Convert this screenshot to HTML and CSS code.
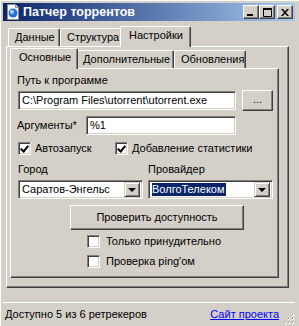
FILE: index.html
```html
<!DOCTYPE html>
<html lang="ru">
<head>
<meta charset="utf-8">
<title>Патчер торрентов</title>
<link rel="stylesheet" href="styles.css">
</head>
<body>
<div class="window">
  <div class="titlebar">
    <svg class="app-icon" width="16" height="16" viewBox="0 0 16 16">
      <path d="M2.5 0.5h8l3 3v12h-11z" fill="#fff" stroke="#8a8a8a"/>
      <path d="M10.5 0.5v3h3" fill="#e0e0e0" stroke="#8a8a8a"/>
      <circle cx="8" cy="9" r="4.5" fill="#2a6fd6"/>
      <circle cx="7" cy="8" r="2.2" fill="#7fb6ff"/>
      <circle cx="6.5" cy="7.5" r="0.9" fill="#e6f2ff"/>
    </svg>
    <span class="title">Патчер торрентов</span>
    <div class="caption-btns">
      <div class="cap">
        <svg width="8" height="7" viewBox="0 0 8 7"><rect x="0" y="5" width="6" height="2" fill="#000"/></svg>
      </div>
      <div class="cap">
        <svg width="9" height="9" viewBox="0 0 9 9"><path d="M0.5 0.5h8v8h-8z" fill="none" stroke="#000"/><rect x="0" y="0" width="9" height="2" fill="#000"/></svg>
      </div>
      <div class="cap close">
        <svg width="8" height="7" viewBox="0 0 8 7"><path d="M0 0h2l2 2.5l2-2.5h2l-3 3.5l3 3.5h-2l-2-2.5l-2 2.5h-2l3-3.5z" fill="#000"/></svg>
      </div>
    </div>
  </div>

  <div class="client">
    <div class="tabs outer-tabs">
      <div class="tab t-data">Данные</div>
      <div class="tab t-struct">Структура</div>
      <div class="tab active t-settings">Настройки</div>
    </div>
    <div class="panel outer-panel">
      <div class="tabs inner-tabs">
        <div class="tab active t-main">Основные</div>
        <div class="tab t-extra">Дополнительные</div>
        <div class="tab t-upd">Обновления</div>
      </div>
      <div class="panel inner-panel">
        <div class="label path-label">Путь к программе</div>
        <div class="row path-row">
          <div class="field path-field">C:\Program Files\utorrent\utorrent.exe</div>
          <div class="btn browse">...</div>
        </div>
        <div class="row args-row">
          <span class="label">Аргументы*</span>
          <div class="field args-field">%1</div>
        </div>
        <div class="row checks-row">
          <div class="check c-auto"><span class="box checked"></span><span>Автозапуск</span></div>
          <div class="check c-stat"><span class="box checked"></span><span>Добавление статистики</span></div>
        </div>
        <div class="combos">
          <div class="combo-col">
            <div class="label">Город</div>
            <div class="combo"><div class="combo-text">Саратов-Энгельс</div><div class="combo-btn"></div></div>
          </div>
          <div class="combo-col">
            <div class="label">Провайдер</div>
            <div class="combo"><div class="combo-text"><span class="sel">ВолгоТелеком</span></div><div class="combo-btn"></div></div>
          </div>
        </div>
        <div class="btn check-btn">Проверить доступность</div>
        <div class="check opt"><span class="box"></span><span>Только принудительно</span></div>
        <div class="check opt"><span class="box"></span><span>Проверка ping'ом</span></div>
      </div>
    </div>
  </div>

  <div class="statusbar">
    <span class="status-text">Доступно 5 из 6 ретрекеров</span>
    <a class="site-link" href="#">Сайт проекта</a>
    <svg class="grip" width="12" height="12" viewBox="0 0 12 12">
      <rect x="9" y="1" width="2" height="2" fill="#fff"/><rect x="9" y="1" width="1" height="1" fill="#808080"/>
      <rect x="5" y="5" width="2" height="2" fill="#fff"/><rect x="5" y="5" width="1" height="1" fill="#808080"/>
      <rect x="9" y="5" width="2" height="2" fill="#fff"/><rect x="9" y="5" width="1" height="1" fill="#808080"/>
      <rect x="1" y="9" width="2" height="2" fill="#fff"/><rect x="1" y="9" width="1" height="1" fill="#808080"/>
      <rect x="5" y="9" width="2" height="2" fill="#fff"/><rect x="5" y="9" width="1" height="1" fill="#808080"/>
      <rect x="9" y="9" width="2" height="2" fill="#fff"/><rect x="9" y="9" width="1" height="1" fill="#808080"/>
    </svg>
  </div>
</div>
</body>
</html>
```

FILE: styles.css
```css
* { box-sizing: border-box; }

html, body {
  margin: 0;
  padding: 0;
  background: #D4D0C8;
}

body {
  font-family: "Liberation Sans", Arial, sans-serif;
  font-size: 11px;
  line-height: 13px;
  color: #000;
}

.window {
  width: 299px;
  height: 326px;
  padding: 3px 4px 0 3px;
  display: flex;
  flex-direction: column;
  background: #D4D0C8;
  box-shadow: inset 1px 1px 0 #fff;
  overflow: hidden;
}

/* ---------- title bar ---------- */
.titlebar {
  height: 18px;
  flex: none;
  display: flex;
  align-items: center;
  padding-left: 2px;
  background: linear-gradient(to right, #0A246A, #A6CAF0);
  color: #fff;
}

.app-icon { flex: none; margin-right: 2px; }

.title {
  font-weight: bold;
  font-size: 12.5px;
  white-space: nowrap;
}

.caption-btns {
  margin-left: auto;
  margin-right: 2px;
  display: flex;
}

.cap {
  width: 16px;
  height: 14px;
  display: flex;
  align-items: center;
  justify-content: center;
  background: #D4D0C8;
  border: 1px solid;
  border-color: #fff #404040 #404040 #fff;
  box-shadow: inset -1px -1px 0 #808080;
}

.cap.close { margin-left: 2px; }

/* ---------- tabs ---------- */
.client {
  flex: none;
  display: flex;
  flex-direction: column;
}

.tabs {
  display: flex;
  align-items: flex-end;
  position: relative;
  z-index: 2;
}

.outer-tabs {
  margin-top: 5px;
  height: 21px;
  padding-left: 5px;
  margin-bottom: -1px;
}

.inner-tabs {
  margin-top: 2px;
  height: 20px;
  padding-left: 2px;
  margin-bottom: -1px;
}

.tab {
  height: 18px;
  padding: 2px 6px 0 6px;
  white-space: nowrap;
  background: #D4D0C8;
  border-top: 1px solid #fff;
  border-left: 1px solid #fff;
  border-right: 1px solid #404040;
  border-radius: 2px 2px 0 0;
  box-shadow: inset -1px 0 0 #808080;
  margin-bottom: 1px;
}

.tab.active {
  height: 21px;
  margin: 0 -2px 0 -2px;
  padding: 2px 8px 0 8px;
  position: relative;
  z-index: 3;
}

.t-data { width: 52px; }
.t-struct { width: 62px; }
.t-settings { width: 71px; }
.t-main { width: 68px; }
.t-extra { width: 98px; }
.t-upd { width: 72px; }

.panel {
  background: #D4D0C8;
  border-top: 1px solid #fff;
  border-left: 1px solid #fff;
  border-right: 1px solid #404040;
  border-bottom: 1px solid #404040;
  box-shadow: inset -1px -1px 0 #808080;
}

.outer-panel {
  margin-left: 3px;
  width: 283px;
  height: 242px;
  padding: 0 0 0 3px;
}

.inner-panel {
  width: 269px;
  height: 210px;
  padding: 4px 0 0 6px;
  display: flex;
  flex-direction: column;
}

/* ---------- form controls ---------- */
.label { white-space: nowrap; }

.path-label { margin-top: 1px; }

.row { display: flex; align-items: center; }

.field {
  height: 19px;
  background: #fff;
  border: 1px solid;
  border-color: #808080 #fff #fff #808080;
  box-shadow: inset 1px 1px 0 #404040, inset -1px -1px 0 #D4D0C8;
  padding: 2px 3px 0 3px;
  white-space: nowrap;
  overflow: hidden;
}

.path-row { margin-top: 3px; margin-left: 1px; height: 21px; }
.path-field { width: 218px; }

.btn {
  display: flex;
  align-items: center;
  justify-content: center;
  background: #D4D0C8;
  border: 1px solid;
  border-color: #fff #404040 #404040 #fff;
  box-shadow: inset -1px -1px 0 #808080;
  white-space: nowrap;
}

.browse {
  width: 31px;
  height: 21px;
  margin-left: 6px;
  padding-bottom: 2px;
}

.args-row { margin-top: 5px; height: 19px; }
.args-row .label { width: 69px; }
.args-field { width: 150px; }

.checks-row { margin-top: 7px; margin-left: 1px; height: 13px; }

.check { display: flex; align-items: center; white-space: nowrap; }
.check .box { margin-right: 4px; }
.c-auto { width: 97px; }

.box {
  width: 13px;
  height: 13px;
  flex: none;
  background: #fff;
  border: 1px solid;
  border-color: #808080 #fff #fff #808080;
  box-shadow: inset 1px 1px 0 #404040, inset -1px -1px 0 #D4D0C8;
  position: relative;
}

.box.checked::after {
  content: "";
  position: absolute;
  left: 3px;
  top: 1px;
  width: 3px;
  height: 6px;
  border: solid #000;
  border-width: 0 2px 2px 0;
  transform: rotate(40deg);
}

.combos {
  display: flex;
  margin-top: 8px;
  margin-left: 1px;
  gap: 5px;
}

.combo-col { display: flex; flex-direction: column; }
.combo-col .label { height: 15px; }
.combo-col .combo { margin-top: 2px; }

.combo {
  width: 125px;
  height: 19px;
  display: flex;
  background: #fff;
  border: 1px solid;
  border-color: #808080 #fff #fff #808080;
  box-shadow: inset 1px 1px 0 #404040, inset -1px -1px 0 #D4D0C8;
  padding: 2px;
}

.combo-text {
  flex: 1;
  padding-left: 1px;
  line-height: 13px;
  white-space: nowrap;
  overflow: hidden;
}

.sel {
  background: #0A246A;
  color: #fff;
  padding: 1px 1px 1px 0;
}

.combo-btn {
  width: 16px;
  height: 15px;
  margin-top: -1px;
  flex: none;
  background: #D4D0C8;
  border: 1px solid;
  border-color: #D4D0C8 #404040 #404040 #D4D0C8;
  box-shadow: inset 1px 1px 0 #fff, inset -1px -1px 0 #808080;
  position: relative;
}

.combo-btn::after {
  content: "";
  position: absolute;
  left: 3px;
  top: 5px;
  border-left: 4px solid transparent;
  border-right: 4px solid transparent;
  border-top: 4px solid #000;
}

.check-btn {
  width: 174px;
  height: 25px;
  margin-top: 6px;
  margin-left: 53px;
}

.opt { margin-left: 70px; }
.check-btn + .opt { margin-top: 5px; }
.opt + .opt { margin-top: 7px; }
.opt .box { margin-right: 6px; }

/* ---------- status bar ---------- */
.statusbar {
  margin-top: 14px;
  border-top: 1px solid #fff;
  height: 24px;
  display: flex;
  align-items: center;
  padding-left: 2px;
  position: relative;
}

.site-link {
  margin-left: auto;
  margin-right: 16px;
  color: #0000FF;
  text-decoration: underline;
}

.grip {
  position: absolute;
  right: 0;
  bottom: 1px;
}
```
